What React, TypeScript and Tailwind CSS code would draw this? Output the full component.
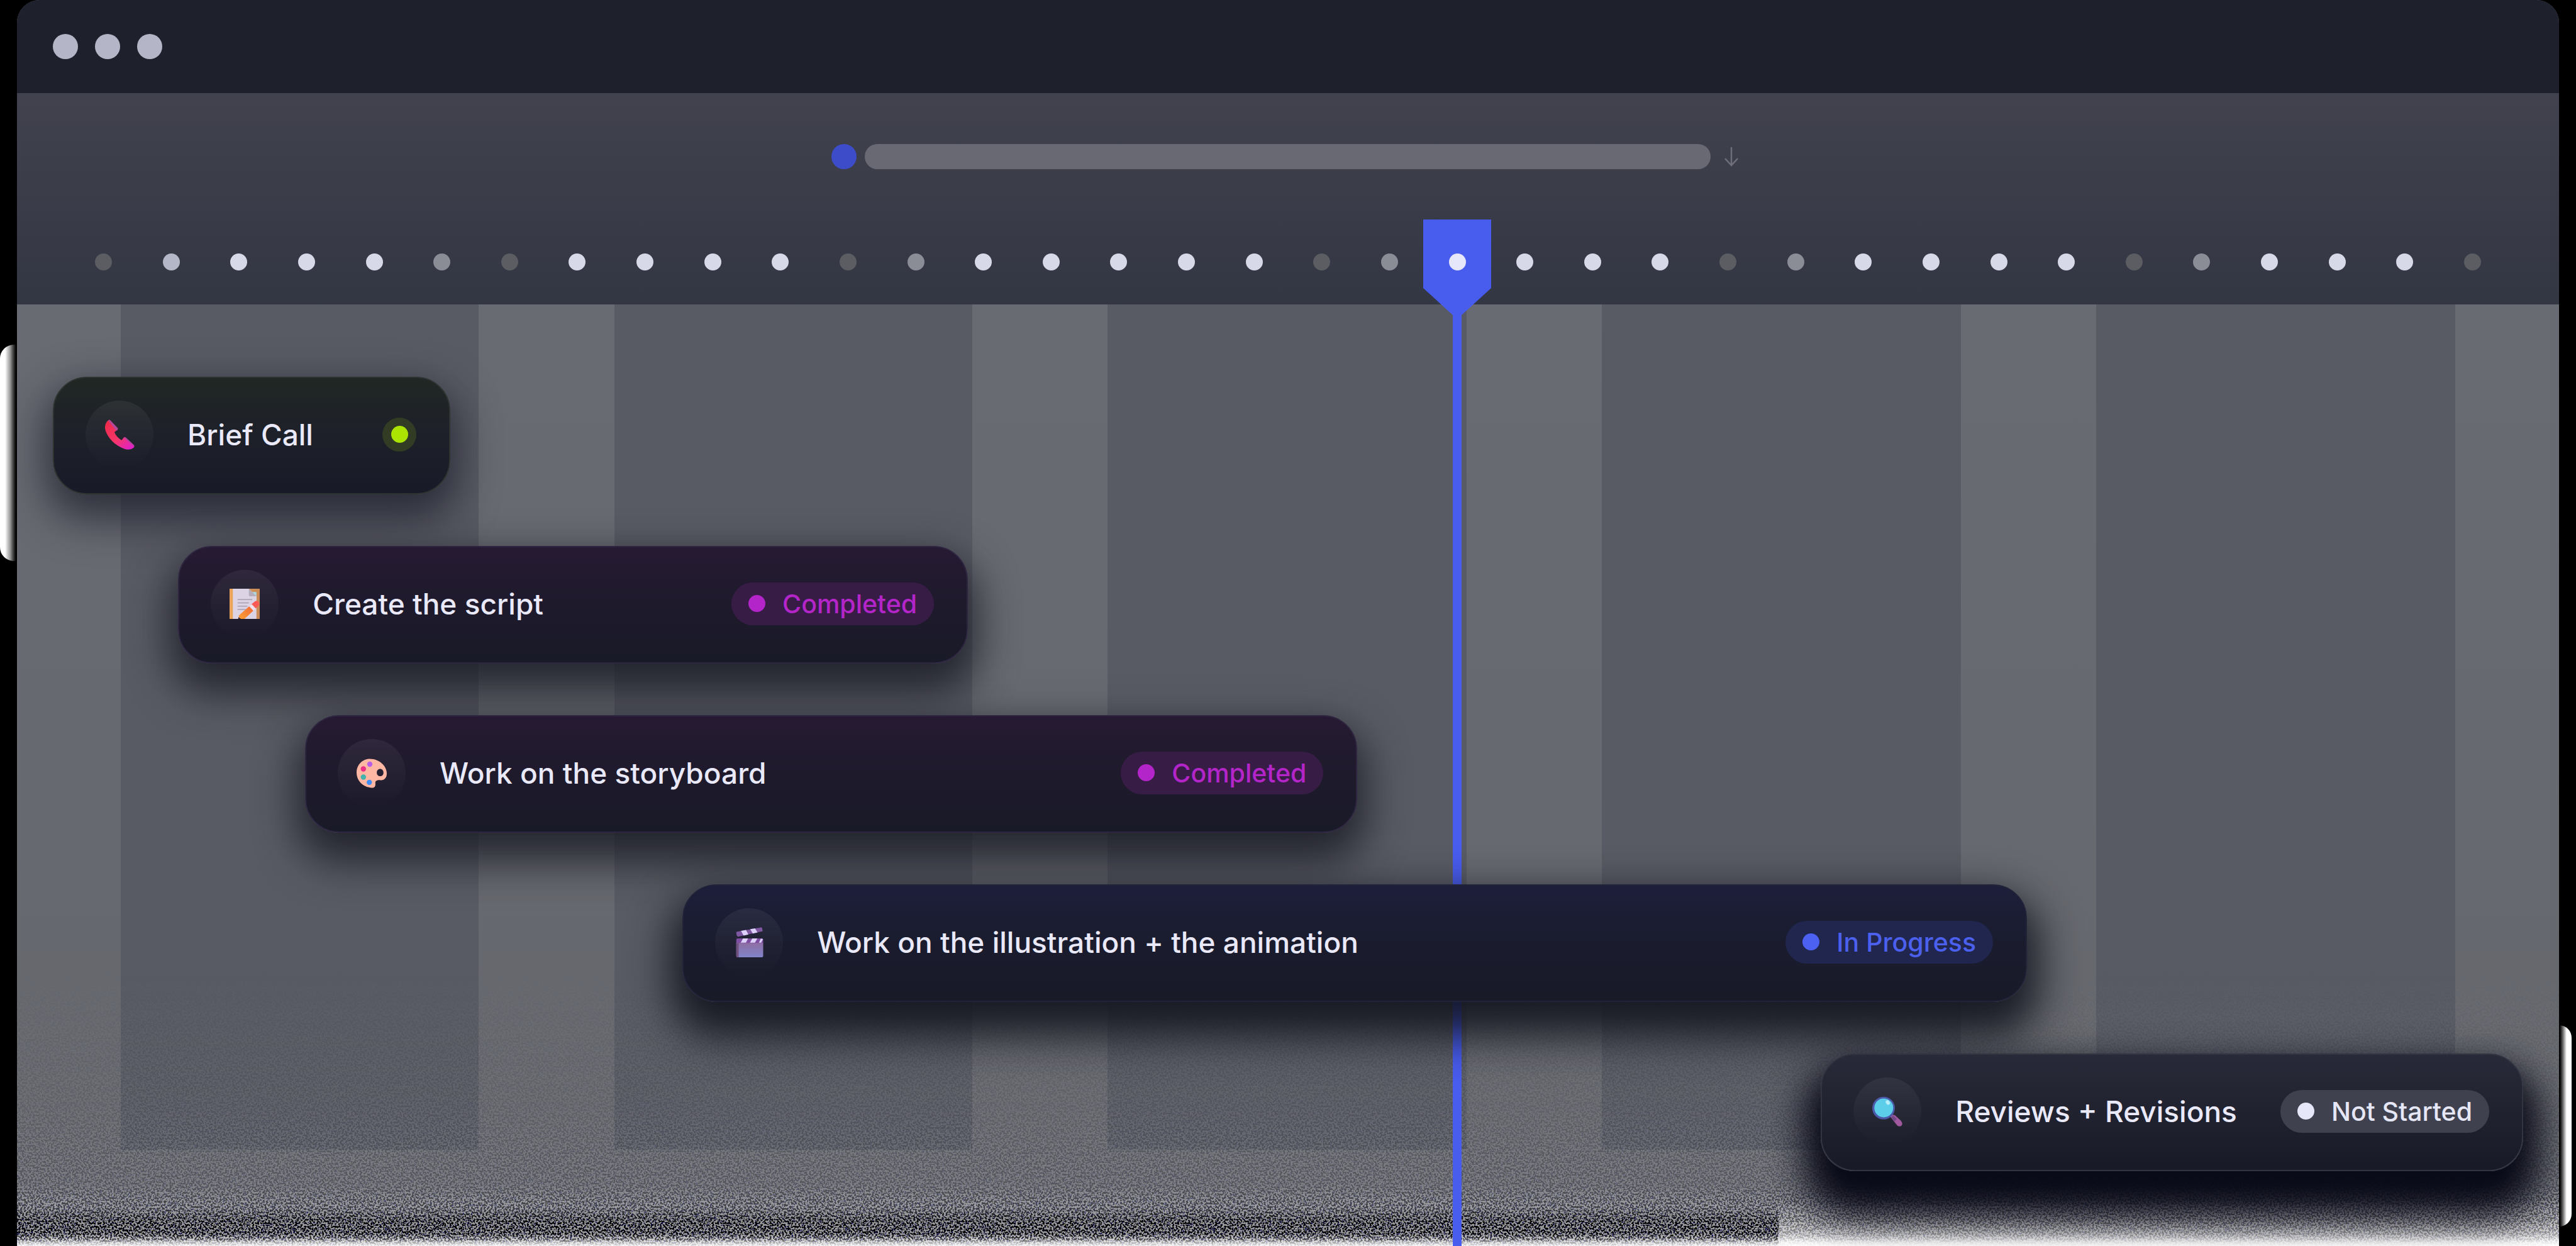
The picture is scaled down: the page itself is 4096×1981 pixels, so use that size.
import type { ReactNode } from "react";

type Tone = "green" | "magenta" | "blue" | "neutral";

type Task = {
  title: string;
  status?: string;
  tone: Tone;
  start: number;
  span: number;
  icon: ReactNode;
};

const TONES: Record<Tone, { card: string; badge: string; dot: string; shadow: string }> = {
  green: {
    card: "from-[#212724] via-[#1d2029] to-[#191a28] border-[#2d3331]",
    badge: "bg-[#323c24]",
    dot: "bg-[#abe303]",
    shadow: "shadow-[0_28px_64px_12px_rgba(24,26,38,0.7)]",
  },
  magenta: {
    card: "from-[#261a32] via-[#1e1a2c] to-[#191a28] border-[#2e2640]",
    badge: "bg-[#371d46] text-[#b425c9]",
    dot: "bg-[#b425c9]",
    shadow: "shadow-[0_32px_64px_14px_rgba(22,24,34,0.8)]",
  },
  blue: {
    card: "from-[#1d1e3a] via-[#1a1c2e] to-[#191a28] border-[#212338]",
    badge: "bg-[#20264e] text-[#4c60ee]",
    dot: "bg-[#4c60f2]",
    shadow: "shadow-[0_36px_64px_20px_rgba(18,20,30,0.9)]",
  },
  neutral: {
    card: "from-[#292a39] via-[#20222f] to-[#191a28] border-[#333441]",
    badge: "bg-[#40414f] text-[#e6e7f6]",
    dot: "bg-[#e6e7f8]",
    shadow: "shadow-[0_44px_56px_28px_rgba(8,9,22,0.98)]",
  },
};

function PhoneIcon() {
  return (
    <svg viewBox="0 0 32 32" className="size-12" aria-hidden="true">
      <defs>
        <linearGradient id="phone" x1="4" y1="3" x2="28" y2="30" gradientUnits="userSpaceOnUse">
          <stop offset="0" stopColor="#ee2a4c" />
          <stop offset="0.55" stopColor="#f8376a" />
          <stop offset="1" stopColor="#e021c4" />
        </linearGradient>
      </defs>
      <path d="M4 0.8 L5.6 0.4 L14 9 Q14.6 10 13.8 11 L10.600 13.400 Q12.500 18.500 18.200 22 L20.600 19 Q21.500 18.200 22.600 19 L31 26.800 Q32.400 28.400 31 29.800 Q27 33.400 20 30.600 Q6.500 25 1.400 12.500 Q-1 5.500 4 0.800 Z" fill="url(#phone)" />
      <path d="M4 0.800 L5.600 0.400 L14 9 Q14.600 10 13.800 11 L12.600 11.900 Z" fill="#b0489c" />
      <path d="M20.600 19 Q21.500 18.200 22.600 19 L31 26.800 Q31.800 27.700 31.500 28.700 Z" fill="#a9479f" />
    </svg>
  );
}

function ScriptIcon() {
  return (
    <svg viewBox="0 0 32 32" className="size-12" aria-hidden="true">
      <defs>
        <linearGradient id="board" x1="0" y1="0" x2="32" y2="0" gradientUnits="userSpaceOnUse">
          <stop offset="0" stopColor="#eda75c" />
          <stop offset="1" stopColor="#c98a58" />
        </linearGradient>
        <linearGradient id="pencil" x1="26" y1="16" x2="11" y2="30" gradientUnits="userSpaceOnUse">
          <stop offset="0" stopColor="#f0633a" />
          <stop offset="1" stopColor="#fb9a34" />
        </linearGradient>
      </defs>
      <path d="M0 0 H32 V32 H0 Z" fill="url(#board)" />
      <path d="M23 3.500 H28.500 V13 H23 Z" fill="#a6dbe6" />
      <path d="M3.500 0 H20.500 L28.500 8 V32 H3.500 Z" fill="#dcd3e4" />
      <path d="M20.500 0 L28.500 8 H22 Q20.500 8 20.500 6.500 Z" fill="#b5acbd" />
      <path d="M8.500 11.500 H24 M8.500 15 H20.500 M8.500 18.500 H19 M8.500 22 H17" stroke="#a79fb2" strokeWidth="1.100" />
      <path d="M22.500 17 L27 13.300 Q29 12 30.700 14 Q32.300 16.500 30.300 18.500 L27 21.500 Z" fill="#fb5a55" />
      <path d="M20.500 19 L23.500 16.400 L27.800 21 L25 23.500 Z" fill="#efe4ee" />
      <path d="M20.800 18.700 L25.200 23.300 L15.800 32 H10.400 L9.700 28.500 Z" fill="url(#pencil)" />
      <path d="M9.500 30 L12 32 H9.100 Z" fill="#3d2b3a" />
    </svg>
  );
}

function PaletteIcon() {
  return (
    <svg viewBox="0 0 32 32" className="size-12" aria-hidden="true">
      <path
        fillRule="evenodd"
        d="M14 1 C24 1 32 8.500 32 16.500 C32 21 29.500 23.800 25.500 23.600 C22 23.200 19.600 24 19.900 26.800 C20.200 29.800 19.500 32 15.500 31.600 C7 30.800 0 24.500 0 15.500 C0 7.500 6 1 14 1 Z M25 11.700 C22.800 11.700 21.400 13.500 21.400 15.600 C21.400 17.800 22.900 19.400 25 19.400 C27.200 19.400 28.500 17.700 28.500 15.600 C28.500 13.500 27.100 11.700 25 11.700 Z"
        fill="#fdb7a2"
      />
      <circle cx="14" cy="6.700" r="2.800" fill="#b85ee6" />
      <circle cx="7.200" cy="11.700" r="2.800" fill="#ec2f86" />
      <circle cx="7.200" cy="20.300" r="2.800" fill="#3fb3ac" />
      <circle cx="13.500" cy="25.900" r="2.800" fill="#3f8ff6" />
    </svg>
  );
}

function ClapperIcon() {
  return (
    <svg viewBox="0 0 32 32" className="size-12" aria-hidden="true">
      <defs>
        <linearGradient id="slate" x1="0" y1="15" x2="0" y2="32" gradientUnits="userSpaceOnUse">
          <stop offset="0" stopColor="#8f6c9e" />
          <stop offset="1" stopColor="#8283ca" />
        </linearGradient>
      </defs>
      <path d="M2.500 5.800 Q2.600 5.200 3.300 4.900 L28.500 0.300 Q29.600 0.200 29.900 1.200 L30.500 4.300 L4.300 10.200 Q2.600 9.500 2.500 5.800 Z" fill="#7e57a1" />
      <path d="M7.500 4 L12.800 3 L15.300 7.800 L10.300 9 Z M17.300 2.200 L22.300 1.300 L25 5.600 L20 6.800 Z" fill="#ddd0fb" />
      <path d="M2.500 13.500 Q2.500 12 4 12 H29.700 Q31 12 31 13.500 V17.500 H2.500 Z" fill="#7e4fa3" />
      <path d="M9.700 12 H15 L12.700 16.500 H7.200 Z M19.500 12 H24.800 L22.300 16.500 H17 Z M28.500 12.100 L30.800 12.600 L28.800 16.500 H26.500 Z" fill="#ddd0fb" />
      <path d="M2.500 16.900 H31 V30.500 Q31 32 29.500 32 H4 Q2.500 32 2.500 30.500 Z" fill="url(#slate)" />
      <path d="M2.500 16.900 H5 V32 H4 Q2.500 32 2.500 30.500 Z" fill="#70507f" />
    </svg>
  );
}

function SearchIcon() {
  return (
    <svg viewBox="0 0 32 32" className="size-12" aria-hidden="true">
      <path d="M19 21.500 Q20.500 18.500 24 20 L30 25.500 Q32.800 28.500 31.200 30.800 Q29.300 32.800 26.500 31 Z" fill="#a0589f" />
      <path d="M20 22.500 L22.300 20.500 L26 24 L23.600 26.500 Z" fill="#6f4a86" />
      <circle cx="12" cy="12.500" r="12" fill="#4c58a8" />
      <circle cx="12.200" cy="12.300" r="10" fill="#5cceea" />
      <ellipse cx="16.500" cy="6.600" rx="2" ry="2.600" fill="#b7ecfb" transform="rotate(-35 16.500 6.600)" />
    </svg>
  );
}

const TASKS: Task[] = [
  { title: "Brief Call", tone: "green", start: 1.41, span: 15.64, icon: <PhoneIcon /> },
  { title: "Create the script", status: "Completed", tone: "magenta", start: 6.34, span: 31.07, icon: <ScriptIcon /> },
  { title: "Work on the storyboard", status: "Completed", tone: "magenta", start: 11.33, span: 41.4, icon: <PaletteIcon /> },
  { title: "Work on the illustration + the animation", status: "In Progress", tone: "blue", start: 26.18, span: 52.89, icon: <ClapperIcon /> },
  { title: "Reviews + Revisions", status: "Not Started", tone: "neutral", start: 70.96, span: 27.63, icon: <SearchIcon /> },
];

const DAY_COLORS: Record<string, string> = {
  d: "bg-[#5b5d62]",
  g: "bg-[#8a8c96]",
  s: "bg-[#b4b7c7]",
  w: "bg-[#d7d9e9]",
  t: "bg-[#e6e7fb]",
};
const DAYS = "dswwwgdwwwwdgwwwwwdgtwwwdgwwwwdgwwwd".split("");

const STRIPES = [196, 678, 256, 678, 256, 679, 256, 679, 256, 680, 196];

function TaskCard({ task }: { task: Task }) {
  const tone = TONES[task.tone];
  return (
    <li
      className={`flex h-[187px] items-center rounded-[54px] border-2 bg-linear-to-b pr-[52px] pb-[4px] pl-[50px] ${tone.card} ${tone.shadow}`}
      style={{ marginLeft: `${task.start}%`, width: `${task.span}%` }}
    >
      <span className="flex size-[108px] shrink-0 items-center justify-center rounded-full bg-linear-to-b from-white/6 to-transparent">
        {task.icon}
      </span>
      <h2 className="ml-[54px] grow text-[46px] leading-[60px] font-medium whitespace-nowrap text-[#e9e9f9]">{task.title}</h2>
      {task.status ? (
        <span className={`flex h-[68px] shrink-0 items-center gap-[27px] rounded-full px-[27px] text-[41px] leading-[48px] font-medium whitespace-nowrap ${tone.badge}`}>
          <span className={`size-[27px] rounded-full ${tone.dot}`} />
          {task.status}
        </span>
      ) : (
        <span className={`flex size-[54px] shrink-0 items-center justify-center rounded-full ${tone.badge}`}>
          <span className={`size-[27px] rounded-full ${tone.dot}`} />
        </span>
      )}
    </li>
  );
}

function Grain() {
  return (
    <svg className="pointer-events-none absolute inset-x-0 bottom-0 h-[440px] w-full" aria-hidden="true">
      <defs>
        <filter id="grain" x="0" y="0" width="100%" height="100%">
          <feTurbulence type="fractalNoise" baseFrequency="0.35" numOctaves="2" seed="7" />
          <feColorMatrix values="8 0 0 0 -3.700  8 0 0 0 -3.700  7 1 0 0 -3.600  0 0 0 0 1" />
        </filter>
        <linearGradient id="grainFade" x1="0" y1="0" x2="0" y2="1">
          <stop offset="0" stopColor="#fff" stopOpacity="0" />
          <stop offset="0.500" stopColor="#fff" stopOpacity="0.060" />
          <stop offset="0.780" stopColor="#fff" stopOpacity="0.160" />
          <stop offset="0.870" stopColor="#fff" stopOpacity="0.400" />
          <stop offset="0.920" stopColor="#fff" stopOpacity="0.900" />
          <stop offset="1" stopColor="#fff" stopOpacity="0.900" />
        </linearGradient>
        <linearGradient id="grainTint" x1="0" y1="0" x2="0" y2="1">
          <stop offset="0.860" stopColor="#000" stopOpacity="0" />
          <stop offset="0.910" stopColor="#000" stopOpacity="0.350" />
          <stop offset="0.955" stopColor="#000" stopOpacity="0.350" />
          <stop offset="0.975" stopColor="#999" stopOpacity="0.400" />
          <stop offset="0.985" stopColor="#ddd" stopOpacity="0.700" />
          <stop offset="1" stopColor="#fff" stopOpacity="0.900" />
        </linearGradient>
        <mask id="grainMask">
          <rect width="100%" height="100%" fill="url(#grainFade)" />
        </mask>
      </defs>
      <g mask="url(#grainMask)">
        <rect width="100%" height="100%" filter="url(#grain)" />
      </g>
      <rect width="100%" height="100%" fill="url(#grainTint)" />
    </svg>
  );
}

export default function App() {
  return (
    <div className="relative flex min-h-screen flex-col overflow-hidden bg-black px-[27px] font-[Inter,sans-serif]">
      <div className="absolute top-[548px] left-0 h-[344px] w-[27px] rounded-l-[22px] bg-linear-to-r from-white from-30% via-[#999] via-60% to-black" />
      <div className="absolute top-[1630px] right-[7px] h-[320px] w-5 rounded-r-[22px] bg-linear-to-l from-white from-40% via-[#999] via-60% to-black" />

      <main className="relative flex grow flex-col overflow-hidden rounded-t-[36px] bg-[#66686e]">
        <header className="flex h-[148px] shrink-0 items-center gap-[27px] bg-[#1e202c] px-[57px]">
          <button type="button" aria-label="Close" className="size-10 rounded-full bg-[#b4b6c8]" />
          <button type="button" aria-label="Minimize" className="size-10 rounded-full bg-[#b4b6c8]" />
          <button type="button" aria-label="Maximize" className="size-10 rounded-full bg-[#b4b6c8]" />
        </header>

        <section aria-label="Schedule" className="relative flex h-[336px] shrink-0 flex-col justify-between bg-linear-to-b from-[#41424e] to-[#333743] pt-[81px] pb-[54px]">
          <div className="ml-[32.050%] flex w-[35.700%] items-center gap-[13px]">
            <span className="size-10 shrink-0 rounded-full bg-[#3d4cc8]" />
            <span className="h-10 grow rounded-full bg-[#696973]" />
            <button type="button" aria-label="Next" className="ml-[8px] text-[#6e6f79]">
              <svg viewBox="0 0 24 32" className="h-8 w-6" fill="none" stroke="currentColor" strokeWidth="2.500" aria-hidden="true">
                <path d="M12 1 V30 M2 19 L12 30 L22 19" />
              </svg>
            </button>
          </div>
          <svg viewBox="0 0 108 154" className="absolute top-[201px] left-[56.660%] h-[154px] w-[108px] -translate-x-1/2" aria-hidden="true">
            <path d="M0 0 H108 V109 L61 152 H47 L0 109 Z" fill="#485cee" />
          </svg>
          <ol className="relative flex items-center justify-between px-[124px]">
            {DAYS.map((day, index) => (
              <li key={index} className={`size-[27px] rounded-full ${DAY_COLORS[day]}`} />
            ))}
          </ol>
        </section>

        <section aria-label="Timeline" className="grid grow">
          <div className="col-start-1 row-start-1 flex bg-[#66686e] pb-[153px]" aria-hidden="true">
            {STRIPES.map((width, index) => (
              <span key={index} className={index % 2 ? "bg-[#595b64]" : "bg-linear-to-b from-[#696b73] to-[#66686e]"} style={{ flex: `${width} 1 0%` }} />
            ))}
          </div>
          <div className="relative col-start-1 row-start-1">
            <Grain />
            <span className="absolute right-0 bottom-0 h-[70px] w-[30.700%] bg-linear-to-t from-white/80 to-transparent" />
            <span className="absolute inset-y-0 left-[56.660%] w-[14px] -translate-x-1/2 bg-[#485cee]" />
          </div>
          <ul className="relative col-start-1 row-start-1 flex flex-col gap-[82px] pt-[115px]">
            {TASKS.map((task) => (
              <TaskCard key={task.title} task={task} />
            ))}
          </ul>
        </section>
      </main>
    </div>
  );
}
